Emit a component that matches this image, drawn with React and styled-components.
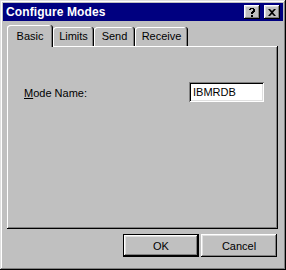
import React from 'react';
import styled, { createGlobalStyle } from 'styled-components';

const GlobalStyle = createGlobalStyle`
  html, body {
    margin: 0;
    padding: 0;
    background: #c0c0c0;
  }
  * {
    box-sizing: border-box;
  }
`;

const Window = styled.div`
  width: 286px;
  height: 270px;
  background: #c0c0c0;
  padding: 3px;
  display: flex;
  flex-direction: column;
  font-family: 'Liberation Sans', Arial, sans-serif;
  font-size: 11px;
  color: #000;
  box-shadow: inset -1px -1px #000, inset 1px 1px #dfdfdf,
    inset -2px -2px #808080, inset 2px 2px #fff;
`;

const TitleBar = styled.div`
  height: 18px;
  background: #000080;
  color: #fff;
  display: flex;
  align-items: center;
  padding: 0 3px 0 3px;
`;

const Title = styled.div`
  flex: 1;
  font-weight: bold;
  font-size: 12px;
  letter-spacing: 0.1px;
`;

const TitleButton = styled.div`
  width: 16px;
  height: 14px;
  margin-left: ${(p) => p.$gap || 0}px;
  background: #c0c0c0;
  color: #000;
  display: flex;
  align-items: center;
  justify-content: center;
  box-shadow: inset -1px -1px #000, inset 1px 1px #fff,
    inset -2px -2px #808080, inset 2px 2px #dfdfdf;
  svg {
    display: block;
  }
`;

const Content = styled.div`
  flex: 1;
  display: flex;
  flex-direction: column;
  padding: 5px 5px 0 4px;
`;

const TabRow = styled.div`
  display: flex;
  align-items: flex-end;
  height: 21px;
  margin-bottom: -1px;
  position: relative;
  z-index: 1;
`;

const Tab = styled.div`
  width: ${(p) => p.$w}px;
  height: ${(p) => (p.$active ? 22 : 19)}px;
  margin-bottom: ${(p) => (p.$active ? 0 : 1)}px;
  background: #c0c0c0;
  border-radius: 3px 3px 0 0;
  display: flex;
  justify-content: center;
  padding-top: ${(p) => (p.$active ? 5 : 3)}px;
  box-shadow: inset -1px 0 #000, inset 1px 1px #fff, inset -2px 0 #808080;
`;

const Panel = styled.div`
  height: 183px;
  background: #c0c0c0;
  display: flex;
  justify-content: space-between;
  align-items: flex-start;
  padding: 36px 14px 0 17px;
  box-shadow: inset -1px -1px #000, inset 1px 1px #fff,
    inset -2px -2px #808080;
`;

const Label = styled.div`
  margin-top: 5px;
  span {
    text-decoration: underline;
  }
`;

const TextBox = styled.div`
  width: 75px;
  height: 20px;
  background: #fff;
  padding: 4px 0 0 4px;
  box-shadow: inset 1px 1px #808080, inset -1px -1px #fff,
    inset 2px 2px #000, inset -2px -2px #dfdfdf;
`;

const Footer = styled.div`
  display: flex;
  justify-content: flex-end;
  gap: 2px;
  padding: 5px 1px 0 0;
`;

const Button = styled.div`
  width: 76px;
  height: 23px;
  display: flex;
  align-items: center;
  justify-content: center;
  background: #c0c0c0;
  box-shadow: ${(p) =>
    p.$default
      ? 'inset -1px -1px #000, inset 1px 1px #000, inset -2px -2px #000, inset 2px 2px #fff, inset -3px -3px #808080, inset 3px 3px #dfdfdf'
      : 'inset -1px -1px #000, inset 1px 1px #fff, inset -2px -2px #808080, inset 2px 2px #dfdfdf'};
`;

const tabs = [
  { label: 'Basic', w: 46 },
  { label: 'Limits', w: 41 },
  { label: 'Send', w: 41 },
  { label: 'Receive', w: 53 },
];

const App = () => {
  return (
    <>
      <GlobalStyle />
      <Window>
        <TitleBar>
          <Title>Configure Modes</Title>
          <TitleButton>
            <svg width="8" height="9" viewBox="0 0 8 9">
              <path d="M1 1h1v-1h4v1h1v3h-1v1h-1v1h-2v-2h1v-1h1v-2h-2v1h-2z" fill="#000" />
              <rect x="3" y="7" width="2" height="2" fill="#000" />
            </svg>
          </TitleButton>
          <TitleButton $gap={4}>
            <svg width="8" height="7" viewBox="0 0 8 7">
              <path d="M0 0h2l2 2 2-2h2l-3 3.5 3 3.5h-2l-2-2-2 2h-2l3-3.5z" fill="#000" />
            </svg>
          </TitleButton>
        </TitleBar>
        <Content>
          <TabRow>
            {tabs.map((t, i) => (
              <Tab key={t.label} $w={t.w} $active={i === 0}>
                {t.label}
              </Tab>
            ))}
          </TabRow>
          <Panel>
            <Label>
              <span>M</span>ode Name:
            </Label>
            <TextBox>IBMRDB</TextBox>
          </Panel>
          <Footer>
            <Button $default>OK</Button>
            <Button>Cancel</Button>
          </Footer>
        </Content>
      </Window>
    </>
  );
};

export default App;
